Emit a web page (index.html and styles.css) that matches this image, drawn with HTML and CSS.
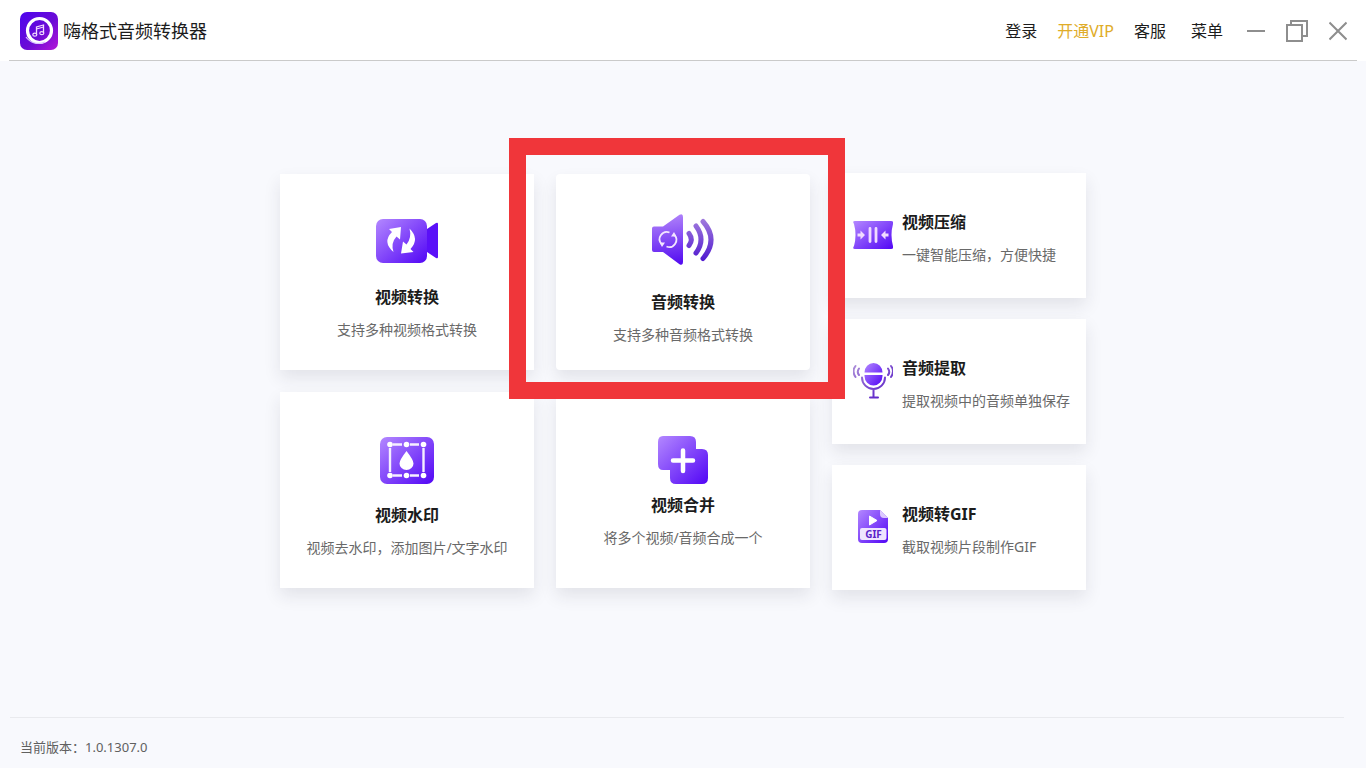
FILE: index.html
```html
<!DOCTYPE html>
<html lang="zh-CN">
<head>
<meta charset="utf-8">
<title>嗨格式音频转换器</title>
<link rel="stylesheet" href="styles.css">
</head>
<body>
<svg class="defs" aria-hidden="true">
  <defs>
    <linearGradient id="violet" x1="0" y1="0" x2="1" y2="1">
      <stop offset="0" stop-color="#b388ff"/><stop offset="1" stop-color="#5206f5"/>
    </linearGradient>
    <linearGradient id="violetDown" gradientUnits="userSpaceOnUse" x1="20" y1="0" x2="28" y2="52">
      <stop offset="0" stop-color="#b184fa"/><stop offset="1" stop-color="#5008f0"/>
    </linearGradient>
    <linearGradient id="waves" gradientUnits="userSpaceOnUse" x1="50" y1="4" x2="50" y2="48">
      <stop offset="0" stop-color="#a27ddd"/><stop offset="1" stop-color="#4e16cf"/>
    </linearGradient>
    <linearGradient id="mic" gradientUnits="userSpaceOnUse" x1="4" y1="4" x2="30" y2="36">
      <stop offset="0" stop-color="#a98ad8"/><stop offset="1" stop-color="#5b20c8"/>
    </linearGradient>
    <linearGradient id="logo" x1="0" y1="0" x2="1" y2="1">
      <stop offset="0" stop-color="#4d05ee"/><stop offset=".55" stop-color="#6a0bd6"/><stop offset="1" stop-color="#b517d8"/>
    </linearGradient>
  </defs>
</svg>

<header class="topbar">
  <div class="brand">
    <svg class="brand-logo" viewBox="0 0 38 38" aria-hidden="true">
      <rect width="38" height="38" rx="7" fill="url(#logo)"/>
      <circle cx="19.500" cy="18.500" r="12" fill="none" stroke="#fff" stroke-width="3.200"/>
      <path d="M6 25c4 6 12 8 19 5" fill="none" stroke="#d9c2ff" stroke-width="1.200"/>
      <path d="M16.500 22.500v-7.500l7-2v8M16.500 17l7-2" fill="none" stroke="#f3d9ff" stroke-width="1.300"/>
      <ellipse cx="14.800" cy="22.700" rx="2" ry="1.500" fill="none" stroke="#f3d9ff" stroke-width="1.200"/>
      <ellipse cx="21.800" cy="21.200" rx="2" ry="1.500" fill="none" stroke="#f3d9ff" stroke-width="1.200"/>
    </svg>
    <h1 class="brand-name">嗨格式音频转换器</h1>
  </div>
  <nav class="menu">
    <button type="button">登录</button>
    <button type="button" class="vip">开通VIP</button>
    <button type="button">客服</button>
    <button type="button" class="menu-more">菜单</button>
  </nav>
  <div class="window-controls">
    <button type="button" aria-label="最小化"><svg width="18" height="22" viewBox="0 0 18 22"><path d="M0 11h18" /></svg></button>
    <button type="button" aria-label="还原"><svg width="22" height="22" viewBox="0 0 22 22"><path d="M1 5h15v16H1zM5 5V1h16v15h-5"/></svg></button>
    <button type="button" aria-label="关闭"><svg width="18" height="22" viewBox="0 0 18 22"><path d="M.5 2.500l17 17M17.500 2.500l-17 17"/></svg></button>
  </div>
</header>

<main class="stage">
  <div class="features">
    <button type="button" class="card">
      <svg class="icon gap-md" viewBox="0 0 64 56" aria-hidden="true">
        <rect x="1" y="5" width="51" height="44" rx="7" fill="url(#violet)"/>
        <path d="M52 15l9-6q2-1 2 1v33q0 2-2 1l-9-6z" fill="#5a10f8"/>
        <path d="M26 13L14 15l3 3Q7 28 18.500 38q-3-9 3-15.500l3.500 3z" fill="#fff"/>
        <path d="M26 39.500l12.500-1.500-3-3Q45 25 34.500 14.500q2.500 9-3 16L28 27.500z" fill="#fff"/>
      </svg>
      <span class="card-title">视频转换</span>
      <span class="card-text">支持多种视频格式转换</span>
    </button>
    <div class="highlighted">
      <button type="button" class="card card-active">
        <svg class="icon gap-lg" viewBox="0 0 64 56" aria-hidden="true">
          <path d="M3 12.500h9L28.500.8Q32-1 32 3v45q0 4-3.500 2.200L12 38H3q-2 0-2-2V14.500q0-2 2-2z" fill="url(#violetDown)"/>
          <g fill="none" stroke="#f3e6ff" stroke-width="1.800">
            <path d="M10.500 30a7.200 7.200 0 0 1 8-11.500"/>
            <path d="M23.500 21a7.200 7.200 0 0 1-8 11.500"/>
          </g>
          <path d="M8.500 28.500h5.500l-3 4.500zM25.500 22.500H20l3-4.500z" fill="#f3e6ff"/>
          <g fill="none" stroke="url(#waves)" stroke-linecap="round" stroke-width="5">
            <path d="M38 19.500q4.500 6 0 12"/>
            <path d="M45 12q10 13.500 0 27"/>
            <path d="M52 7.500q16 18 0 37"/>
          </g>
        </svg>
        <span class="card-title">音频转换</span>
        <span class="card-text">支持多种音频格式转换</span>
      </button>
      <div class="marker"></div>
    </div>
    <button type="button" class="card">
      <svg class="icon gap-md" viewBox="0 0 64 56" aria-hidden="true">
        <rect x="5" y="5" width="54" height="47" rx="7" fill="url(#violet)"/>
        <g stroke="#f6efff" stroke-width="2.400"><path d="M18 12.500h9M35 12.500h9M18 43.500h9M35 43.500h9M15 16v24M48.500 16v24"/></g>
        <g fill="#fff"><circle cx="15" cy="12.500" r="2.800"/><circle cx="31.500" cy="12.500" r="2.800"/><circle cx="48.500" cy="12.500" r="2.800"/><circle cx="15" cy="43.500" r="2.800"/><circle cx="31.500" cy="43.500" r="2.800"/><circle cx="48.500" cy="43.500" r="2.800"/>
        <path d="M31.500 19q7 9 7 12.500a7 6.500 0 0 1-14 0Q24.500 28 31.500 19z"/></g>
      </svg>
      <span class="card-title">视频水印</span>
      <span class="card-text">视频去水印，添加图片/文字水印</span>
    </button>
    <button type="button" class="card">
      <svg class="icon gap-sm" viewBox="0 0 64 56" aria-hidden="true">
        <path d="M12 4h27q6 0 6 6v7h6q6 0 6 6v23q0 6-6 6H25q-6 0-6-6v-8h-7q-5 0-5-6V10q0-6 5-6z" fill="url(#violet)"/>
        <path d="M32 18.500v20.500M22 28.500h20" stroke="#fff" stroke-width="4.500" stroke-linecap="round"/>
      </svg>
      <span class="card-title">视频合并</span>
      <span class="card-text">将多个视频/音频合成一个</span>
    </button>
  </div>

  <div class="tools">
    <button type="button" class="tool">
      <svg class="tool-icon" viewBox="0 0 40 40" aria-hidden="true">
        <path d="M2 6h36q3 0 2 3-3 11 0 22 1 3-2 3H2q-3 0-1-3 3-11 0-22Q-1 6 2 6z" fill="url(#violet)"/>
        <path d="M17 13.500v13M23 13.500v13" stroke="#f0dcff" stroke-width="2.800" stroke-linecap="round"/>
        <path d="M4.500 18.500h3V15.500l4.500 4.500-4.500 4.500v-3h-3zM35.500 18.500h-3V15.500L28 20l4.500 4.500v-3h3z" fill="#f0dcff"/>
      </svg>
      <span class="tool-copy"><span class="card-title">视频压缩</span><span class="card-text">一键智能压缩，方便快捷</span></span>
    </button>
    <button type="button" class="tool">
      <svg class="tool-icon" viewBox="0 0 40 40" aria-hidden="true">
        <path d="M11.500 11.500a9 9.500 0 0 1 18 0zM11.500 14h18v1a9 9.500 0 0 1-18 0z" fill="url(#violet)"/>
        <g fill="none" stroke="url(#mic)" stroke-width="2" stroke-linecap="round">
          <path d="M9 16.500a11.500 11.500 0 0 0 23 0M20.500 28v7.500M17 36.500h8"/>
          <path d="M2.500 5q-4 5 0 11M6 7.500q-2.500 3.500 0 6.500M35 7.500q2.500 3.500 0 6.500M38 5q4 5 0 11"/>
        </g>
      </svg>
      <span class="tool-copy"><span class="card-title">音频提取</span><span class="card-text">提取视频中的音频单独保存</span></span>
    </button>
    <button type="button" class="tool">
      <svg class="tool-icon" viewBox="0 0 40 40" aria-hidden="true">
        <path d="M9 3h18l8 8v21q0 4-4 4H9q-4 0-4-4V7q0-4 4-4z" fill="url(#violet)"/>
        <path d="M27 3l8 8h-4q-4 0-4-4z" fill="#dcc9ff"/>
        <path d="M16.500 9l7.500 4.500-7.500 4.500z" fill="#fff" stroke="#fff" stroke-linejoin="round"/>
        <rect x="7" y="21" width="26.500" height="12" rx="2" fill="#efe4ff"/>
        <text class="gif-label" x="20.500" y="31" text-anchor="middle">GIF</text>
      </svg>
      <span class="tool-copy"><span class="card-title">视频转GIF</span><span class="card-text">截取视频片段制作GIF</span></span>
    </button>
  </div>
</main>

<footer class="status">当前版本：1.0.1307.0</footer>
</body>
</html>
```
FILE: styles.css
```css
* { box-sizing: border-box; }

body {
  margin: 0;
  min-height: 100vh;
  display: flex;
  flex-direction: column;
  background: #f8f9fd;
  color: #1c1c1c;
  font-family: "Noto Sans", "Noto Sans CJK SC", sans-serif;
}

button {
  margin: 0;
  padding: 0;
  border: 0;
  background: none;
  color: inherit;
  font: inherit;
  cursor: pointer;
}

.defs { position: absolute; width: 0; height: 0; }

.topbar {
  display: flex;
  align-items: center;
  height: 61px;
  padding: 0 19px 0 20px;
  background: linear-gradient(#cacaca, #cacaca) center bottom / calc(100% - 18px) 1px no-repeat #fff;
}

.brand { display: flex; align-items: center; gap: 5px; margin-right: auto; }
.brand-logo { width: 38px; height: 38px; }
.brand-name { margin: 0; font-size: 18px; line-height: 24px; font-weight: 400; }

.menu { display: flex; gap: 20px; font-size: 16px; line-height: 24px; }
.menu .vip { color: #e0ac28; }
.menu .menu-more { margin-left: 5px; }

.window-controls { display: flex; gap: 21px; margin-left: 24px; }
.window-controls svg { display: block; fill: none; stroke: #8e8e8e; stroke-width: 2; }

.stage {
  flex: 1;
  display: flex;
  justify-content: center;
  align-items: center;
  gap: 22px;
  padding-bottom: 16px;
}

.features {
  display: grid;
  grid-template-columns: repeat(2, 254px);
  gap: 22px;
}

.card, .tool {
  background: #fff;
  box-shadow: 0 8px 16px rgba(40, 40, 60, 0.1);
}

.card {
  display: flex;
  flex-direction: column;
  align-items: center;
  justify-content: flex-start;
  width: 100%;
  min-height: 196px;
  padding: 40px 12px 16px;
}

.icon { flex: none; width: 64px; height: 56px; }
.gap-sm { margin-bottom: 5px; }
.gap-md { margin-bottom: 15px; }
.gap-lg { margin-bottom: 20px; }

.card-title { font-size: 16px; line-height: 24px; font-weight: 700; }
.card-text { margin-top: 9px; font-size: 14px; line-height: 24px; color: #696969; }

.highlighted { position: relative; }
.card-active { border-radius: 4px; }

.marker {
  position: absolute;
  z-index: 2;
  inset: -36px -35px -29px -47px;
  border: 17px solid #f0363a;
  pointer-events: none;
}

.tools { display: grid; grid-template-columns: 254px; gap: 21px; }

.tool {
  display: flex;
  align-items: center;
  gap: 9px;
  min-height: 125px;
  padding: 0 12px 0 21px;
  text-align: left;
}

.tool-icon { flex: none; width: 40px; height: 40px; }
.tool-copy { display: flex; flex-direction: column; padding-top: 7px; }
.gif-label { font-size: 10px; font-weight: 700; fill: #5b22c9; }

.status {
  height: 51px;
  padding: 18px 20px 0;
  background: linear-gradient(#e9eaee, #e9eaee) 10px top / calc(100% - 32px) 1px no-repeat;
  font-size: 13px;
  line-height: 24px;
  color: #606060;
}
```
